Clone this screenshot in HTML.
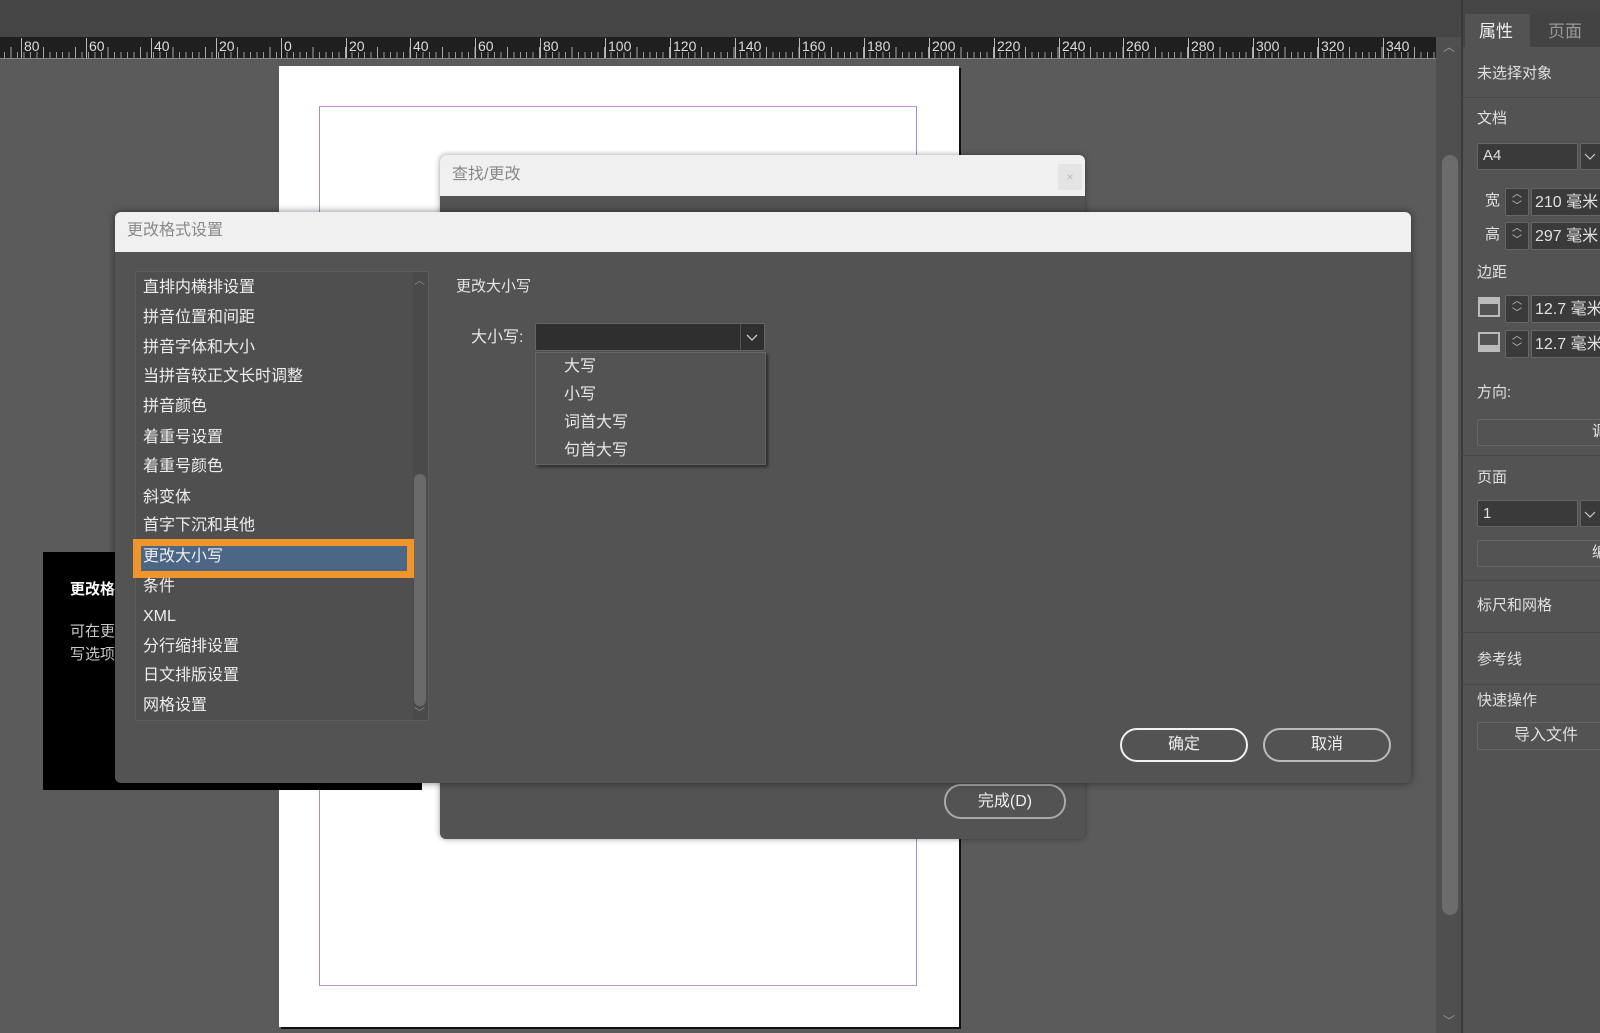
<!DOCTYPE html>
<html><head><meta charset="utf-8">
<style>
*{margin:0;padding:0;box-sizing:border-box}
body{width:1600px;height:1033px;overflow:hidden;background:#5b5b5b;position:relative;font-family:"Liberation Sans","Noto Sans CJK SC",sans-serif;color:#e6e6e6}
.a{position:absolute}
.t{position:absolute;white-space:nowrap;font-size:16px;line-height:20px}
.rl{position:absolute;top:38px;font-size:14px;color:#ddd;line-height:16px}
.mj{position:absolute;top:38px;width:1px;height:20px;background:#bbb}
.li{position:absolute;left:143px;font-size:16px;line-height:20px;color:#eee;white-space:nowrap}
.btn{position:absolute;border:2px solid #ddd;border-radius:17px;text-align:center;font-size:16px;color:#eee}
.pt{position:absolute;left:1477px;font-size:15px;color:#e0e0e0;white-space:nowrap;line-height:18px}
.fld{position:absolute;background:#3a3a3a;border:1px solid #666;border-radius:2px}
.sep{position:absolute;left:1461px;width:139px;height:1px;background:#474747}
</style></head><body>
<!-- top bar -->
<div class="a" style="left:0;top:0;width:1461px;height:37px;background:#454545"></div>
<!-- ruler -->
<div class="a" style="left:0;top:37px;width:1436px;height:22px;background:#1f1f1f;border-bottom:1px solid #888"></div>
<div class="a" style="left:0;top:52px;width:1436px;height:6px;background:repeating-linear-gradient(90deg,transparent 0 5.48px,#999 5.48px 6.48px);background-position:281px 0"></div>
<div class="a" style="left:0;top:47px;width:1436px;height:11px;background:repeating-linear-gradient(90deg,transparent 0 31.4px,#aaa 31.4px 32.4px);background-position:281px 0"></div>
<div class="mj" style="left:21px"></div><div class="rl" style="left:24px">80</div>
<div class="mj" style="left:86px"></div><div class="rl" style="left:89px">60</div>
<div class="mj" style="left:151px"></div><div class="rl" style="left:154px">40</div>
<div class="mj" style="left:216px"></div><div class="rl" style="left:219px">20</div>
<div class="mj" style="left:281px"></div><div class="rl" style="left:284px">0</div>
<div class="mj" style="left:346px"></div><div class="rl" style="left:349px">20</div>
<div class="mj" style="left:410px"></div><div class="rl" style="left:413px">40</div>
<div class="mj" style="left:475px"></div><div class="rl" style="left:478px">60</div>
<div class="mj" style="left:540px"></div><div class="rl" style="left:543px">80</div>
<div class="mj" style="left:605px"></div><div class="rl" style="left:608px">100</div>
<div class="mj" style="left:670px"></div><div class="rl" style="left:673px">120</div>
<div class="mj" style="left:735px"></div><div class="rl" style="left:738px">140</div>
<div class="mj" style="left:799px"></div><div class="rl" style="left:802px">160</div>
<div class="mj" style="left:864px"></div><div class="rl" style="left:867px">180</div>
<div class="mj" style="left:929px"></div><div class="rl" style="left:932px">200</div>
<div class="mj" style="left:994px"></div><div class="rl" style="left:997px">220</div>
<div class="mj" style="left:1059px"></div><div class="rl" style="left:1062px">240</div>
<div class="mj" style="left:1123px"></div><div class="rl" style="left:1126px">260</div>
<div class="mj" style="left:1188px"></div><div class="rl" style="left:1191px">280</div>
<div class="mj" style="left:1253px"></div><div class="rl" style="left:1256px">300</div>
<div class="mj" style="left:1318px"></div><div class="rl" style="left:1321px">320</div>
<div class="mj" style="left:1383px"></div><div class="rl" style="left:1386px">340</div>
<!-- scrollbar -->
<div class="a" style="left:1436px;top:37px;width:25px;height:996px;background:#4f4f4f"></div>
<div class="a" style="left:1442px;top:155px;width:16px;height:760px;background:#6c6c6c;border-radius:8px"></div>
<div class="a" style="left:1443px;top:38px;font-size:12px;color:#999">︿</div>
<div class="a" style="left:1443px;top:1012px;font-size:12px;color:#999">﹀</div>
<!-- page -->
<div class="a" style="left:279px;top:66px;width:680px;height:961px;background:#fff;box-shadow:2px 2px 0 #111"></div>
<div class="a" style="left:319px;top:106px;width:598px;height:880px;border:1px solid #c590d0;border-left-color:#9a8de0;border-right-color:#9a8de0"></div>
<!-- find dialog -->
<div class="a" style="left:440px;top:155px;width:645px;height:684px;background:#535353;border-radius:6px;box-shadow:0 0 6px rgba(0,0,0,.4)"></div>
<div class="a" style="left:440px;top:155px;width:645px;height:41px;background:#f0f0f0;border-radius:6px 6px 0 0"></div>
<div class="t" style="left:452px;top:165px;color:#888">查找/更改</div>
<div class="a" style="left:1058px;top:164px;width:24px;height:26px;background:#e4e4e4;color:#bbb;font-size:12px;text-align:center;line-height:26px">×</div>
<div class="btn" style="left:944px;top:784px;width:122px;height:35px;line-height:31px;border-color:#aaa">完成(D)</div>
<!-- tooltip -->
<div class="a" style="left:43px;top:552px;width:379px;height:238px;background:#000"></div>
<div class="t" style="left:70px;top:580px;font-weight:bold;font-size:15px;color:#fff">更改格</div>
<div class="t" style="left:70px;top:622px;font-size:15px;color:#ccc">可在更</div>
<div class="t" style="left:70px;top:645px;font-size:15px;color:#ccc">写选项</div>
<!-- main dialog -->
<div class="a" style="left:115px;top:212px;width:1296px;height:571px;background:#535353;border-radius:6px;box-shadow:0 0 8px rgba(0,0,0,.5)"></div>
<div class="a" style="left:115px;top:212px;width:1296px;height:40px;background:#f0f0f0;border-radius:6px 6px 0 0"></div>
<div class="t" style="left:127px;top:221px;color:#888">更改格式设置</div>
<!-- list -->
<div class="a" style="left:135px;top:271px;width:294px;height:450px;background:#4f4f4f;border:1px solid #5c5c5c"></div>
<div class="a" style="left:413px;top:272px;width:15px;height:448px;background:#4a4a4a"></div>
<div class="a" style="left:414px;top:474px;width:12px;height:232px;background:#6a6a6a;border-radius:6px"></div>
<div class="a" style="left:414px;top:272px;font-size:11px;color:#888">︿</div>
<div class="a" style="left:414px;top:704px;font-size:11px;color:#888">﹀</div>
<div class="a" style="left:133px;top:539px;width:281px;height:39px;border:4px solid #f0952a;background:#f0952a"></div>
<div class="a" style="left:141px;top:546px;width:266px;height:25px;background:#4c6685"></div>
<div class="li" style="top:278px">直排内横排设置</div>
<div class="li" style="top:308px">拼音位置和间距</div>
<div class="li" style="top:338px">拼音字体和大小</div>
<div class="li" style="top:367px">当拼音较正文长时调整</div>
<div class="li" style="top:397px">拼音颜色</div>
<div class="li" style="top:428px">着重号设置</div>
<div class="li" style="top:457px">着重号颜色</div>
<div class="li" style="top:488px">斜变体</div>
<div class="li" style="top:516px">首字下沉和其他</div>
<div class="li" style="top:547px">更改大小写</div>
<div class="li" style="top:577px">条件</div>
<div class="li" style="top:607px">XML</div>
<div class="li" style="top:637px">分行缩排设置</div>
<div class="li" style="top:666px">日文排版设置</div>
<div class="li" style="top:696px">网格设置</div>
<!-- right content -->
<div class="t" style="left:456px;top:277px;font-size:15px">更改大小写</div>
<div class="t" style="left:471px;top:328px;font-size:16px">大小写:</div>
<div class="a" style="left:535px;top:323px;width:230px;height:28px;background:#2f2f2f;border:1px solid #666;border-radius:2px"></div>
<div class="a" style="left:740px;top:324px;width:1px;height:26px;background:#555"></div>
<svg class="a" style="left:746px;top:332px" width="12" height="10"><path d="M1 3 L6 8 L11 3" fill="none" stroke="#ccc" stroke-width="1.3"/></svg>
<div class="a" style="left:535px;top:352px;width:231px;height:113px;background:#535353;border:1px solid #666;box-shadow:2px 2px 3px rgba(0,0,0,.5)"></div>
<div class="t" style="left:564px;top:357px">大写</div>
<div class="t" style="left:564px;top:385px">小写</div>
<div class="t" style="left:564px;top:413px">词首大写</div>
<div class="t" style="left:564px;top:441px">句首大写</div>
<div class="btn" style="left:1120px;top:728px;width:128px;height:34px;line-height:30px;border-color:#f0f0f0">确定</div>
<div class="btn" style="left:1263px;top:728px;width:128px;height:34px;line-height:30px;border-color:#bbb">取消</div>
<!-- right panel -->
<div class="a" style="left:1461px;top:0;width:139px;height:1033px;background:#535353;border-left:2px solid #3a3a3a"></div>
<div class="a" style="left:1463px;top:0;width:137px;height:14px;background:#454545"></div>
<div class="a" style="left:1463px;top:14px;width:137px;height:33px;background:#434343"></div>
<div class="a" style="left:1465px;top:14px;width:65px;height:33px;background:#535353"></div>
<div class="t" style="left:1479px;top:22px;font-size:17px;color:#eee">属性</div>
<div class="t" style="left:1548px;top:22px;font-size:17px;color:#999">页面</div>
<div class="pt" style="top:65px">未选择对象</div>
<div class="sep" style="top:97px"></div>
<div class="pt" style="top:110px">文档</div>
<div class="fld" style="left:1477px;top:143px;width:101px;height:27px"></div>
<div class="pt" style="left:1483px;top:147px">A4</div>
<div class="fld" style="left:1580px;top:143px;width:22px;height:27px"></div>
<svg class="a" style="left:1584px;top:151px" width="12" height="10"><path d="M1 3 L6 8 L11 3" fill="none" stroke="#ccc" stroke-width="1.2"/></svg>
<div class="pt" style="left:1485px;top:192px">宽</div>
<div class="fld" style="left:1505px;top:188px;width:24px;height:28px;font-size:10px;color:#ccc;text-align:center;line-height:12px">︿<br>﹀</div>
<div class="fld" style="left:1531px;top:188px;width:72px;height:28px"></div>
<div class="pt" style="left:1535px;top:194px;font-size:16px">210 毫米</div>
<div class="pt" style="left:1485px;top:226px">高</div>
<div class="fld" style="left:1505px;top:222px;width:24px;height:28px;font-size:10px;color:#ccc;text-align:center;line-height:12px">︿<br>﹀</div>
<div class="fld" style="left:1531px;top:222px;width:72px;height:28px"></div>
<div class="pt" style="left:1535px;top:228px;font-size:16px">297 毫米</div>
<div class="pt" style="top:264px">边距</div>
<div class="a" style="left:1478px;top:297px;width:22px;height:20px;border:2px solid #bbb;border-top-width:7px"></div>
<div class="fld" style="left:1505px;top:295px;width:24px;height:28px;font-size:10px;color:#ccc;text-align:center;line-height:12px">︿<br>﹀</div>
<div class="fld" style="left:1531px;top:295px;width:72px;height:28px"></div>
<div class="pt" style="left:1535px;top:301px;font-size:16px">12.7 毫米</div>
<div class="a" style="left:1478px;top:332px;width:22px;height:20px;border:2px solid #bbb;border-bottom-width:7px"></div>
<div class="fld" style="left:1505px;top:330px;width:24px;height:28px;font-size:10px;color:#ccc;text-align:center;line-height:12px">︿<br>﹀</div>
<div class="fld" style="left:1531px;top:330px;width:72px;height:28px"></div>
<div class="pt" style="left:1535px;top:336px;font-size:16px">12.7 毫米</div>
<div class="pt" style="top:384px">方向:</div>
<div class="a" style="left:1477px;top:419px;width:130px;height:27px;border:1px solid #666;border-radius:2px"></div>
<div class="pt" style="left:1592px;top:423px">调</div>
<div class="sep" style="top:455px"></div>
<div class="pt" style="top:469px">页面</div>
<div class="fld" style="left:1477px;top:500px;width:101px;height:27px"></div>
<div class="pt" style="left:1483px;top:505px">1</div>
<div class="fld" style="left:1580px;top:500px;width:22px;height:27px"></div>
<svg class="a" style="left:1584px;top:509px" width="12" height="10"><path d="M1 3 L6 8 L11 3" fill="none" stroke="#ccc" stroke-width="1.2"/></svg>
<div class="a" style="left:1477px;top:540px;width:130px;height:27px;border:1px solid #666;border-radius:2px"></div>
<div class="pt" style="left:1592px;top:544px">编</div>
<div class="sep" style="top:580px"></div>
<div class="pt" style="top:597px">标尺和网格</div>
<div class="sep" style="top:632px"></div>
<div class="pt" style="top:651px">参考线</div>
<div class="sep" style="top:684px"></div>
<div class="pt" style="top:692px">快速操作</div>
<div class="a" style="left:1477px;top:722px;width:130px;height:28px;border:1px solid #666;border-radius:2px"></div>
<div class="pt" style="left:1514px;top:727px;font-size:16px">导入文件</div>
</body></html>
